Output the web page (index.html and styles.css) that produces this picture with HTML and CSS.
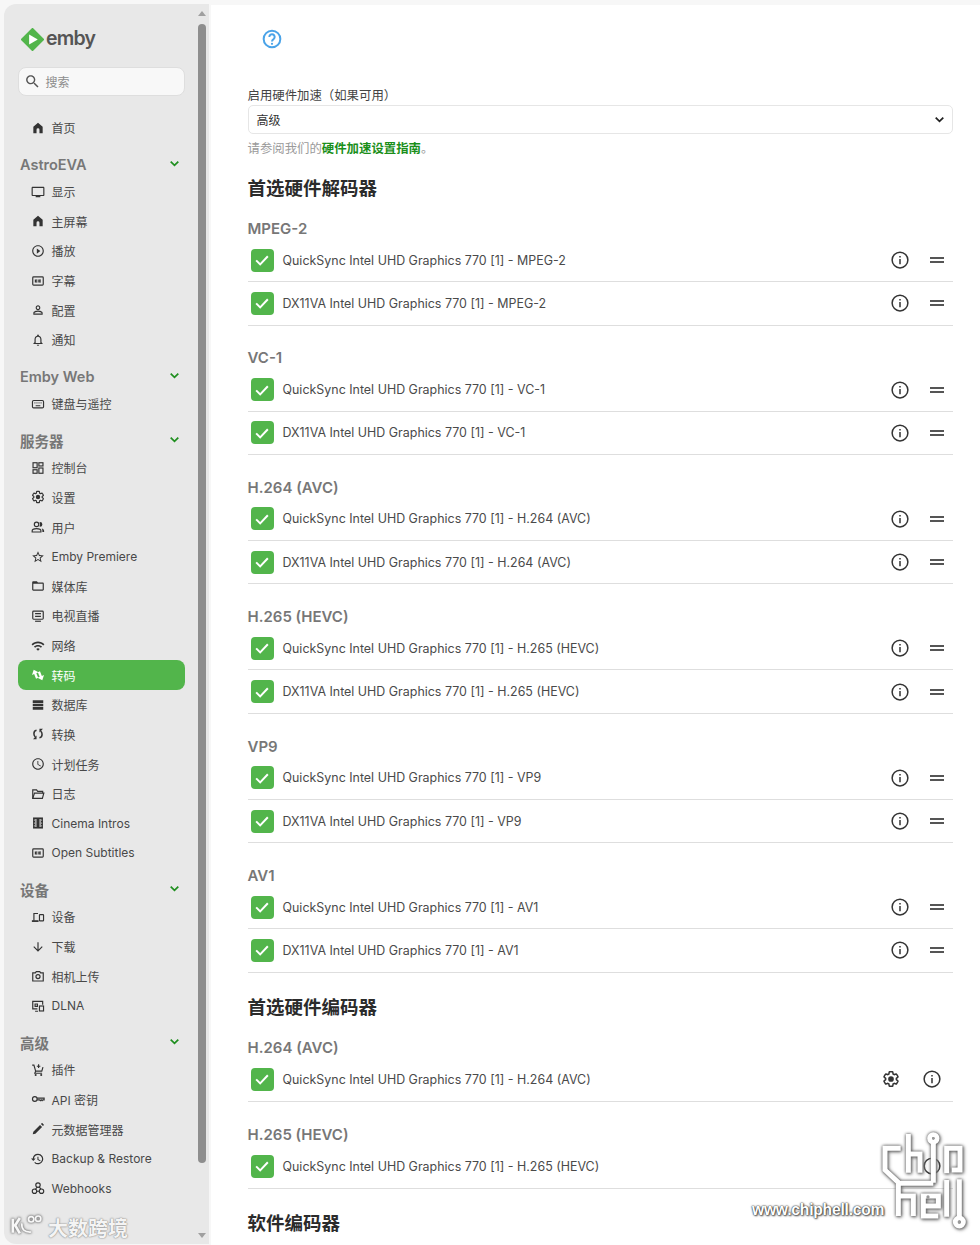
FILE: index.html
```html
<!DOCTYPE html>
<html lang="zh-CN">
<head>
<meta charset="utf-8">
<title>转码</title>
<link rel="stylesheet" href="styles.css">
</head>
<body>
<svg class="sprite" aria-hidden="true">
  <defs>
    <symbol id="i-home" viewBox="0 0 24 24"><path d="M4 21V10l8-7 8 7v11h-5.500v-6a2.500 2.500 0 0 0-5 0v6z"/></symbol>
    <symbol id="i-tv" viewBox="0 0 24 24"><path d="M21 3H3c-1.100 0-2 .9-2 2v12c0 1.100.9 2 2 2h5v2h8v-2h5c1.100 0 2-.9 2-2V5c0-1.100-.9-2-2-2zm0 14H3V5h18v12z"/></symbol>
    <symbol id="i-play" viewBox="0 0 24 24"><path d="M10 16.500l6-4.500-6-4.500v9zM12 2C6.480 2 2 6.480 2 12s4.480 10 10 10 10-4.480 10-10S17.520 2 12 2zm0 18c-4.410 0-8-3.590-8-8s3.590-8 8-8 8 3.590 8 8-3.590 8-8 8z"/></symbol>
    <symbol id="i-cc" viewBox="0 0 24 24"><g class="ln"><rect x="3" y="5" width="18" height="14" rx="1.500"/><path d="M11 10.500H7.500v3H11M17 10.500h-3.500v3H17"/></g></symbol>
    <symbol id="i-person" viewBox="0 0 24 24"><path d="M12 5.900c1.160 0 2.100.94 2.100 2.100s-.94 2.100-2.100 2.100S9.900 9.160 9.900 8s.94-2.100 2.100-2.100m0 9c2.970 0 6.100 1.460 6.100 2.100v1.100H5.900V17c0-.64 3.130-2.100 6.100-2.100M12 4C9.790 4 8 5.790 8 8s1.790 4 4 4 4-1.790 4-4-1.790-4-4-4zm0 9c-2.670 0-8 1.340-8 4v3h16v-3c0-2.660-5.330-4-8-4z"/></symbol>
    <symbol id="i-bell" viewBox="0 0 24 24"><path d="M12 22c1.100 0 2-.9 2-2h-4c0 1.100.9 2 2 2zm6-6v-5c0-3.070-1.630-5.640-4.500-6.320V4c0-.83-.67-1.500-1.500-1.500s-1.500.67-1.500 1.500v.68C7.640 5.360 6 7.920 6 11v5l-2 2v1h16v-1l-2-2zm-2 1H8v-6c0-2.480 1.510-4.500 4-4.500s4 2.020 4 4.500v6z"/></symbol>
    <symbol id="i-keyboard" viewBox="0 0 24 24"><g class="ln"><rect x="2.500" y="6" width="19" height="12.500" rx="2"/><path d="M6 10h1.500M9.500 10H11M13 10h1.500M16.500 10H18M8 15h8"/></g></symbol>
    <symbol id="i-dash" viewBox="0 0 24 24"><g class="ln"><rect x="3.500" y="3" width="7" height="8.500"/><rect x="13.500" y="3" width="7" height="5.500"/><rect x="3.500" y="15" width="7" height="6"/><rect x="13.500" y="12" width="7" height="9"/></g></symbol>
    <symbol id="i-gear" viewBox="0 0 24 24"><path class="ln" d="M19.140 12.940c.04-.3.06-.61.06-.94 0-.32-.02-.64-.07-.94l2.030-1.580c.18-.14.23-.41.12-.61l-1.920-3.320c-.12-.22-.37-.29-.59-.22l-2.390.96c-.5-.38-1.030-.7-1.620-.94l-.36-2.540c-.04-.24-.24-.41-.48-.41h-3.840c-.24 0-.43.17-.47.41l-.36 2.540c-.59.24-1.130.57-1.620.94l-2.390-.96c-.22-.08-.47 0-.59.22L2.740 8.870c-.12.21-.08.47.12.61l2.030 1.580c-.05.3-.09.63-.09.94s.02.64.07.94l-2.030 1.580c-.18.14-.23.41-.12.61l1.920 3.320c.12.22.37.29.59.22l2.390-.96c.5.38 1.030.7 1.620.94l.36 2.540c.05.24.24.41.48.41h3.840c.24 0 .44-.17.47-.41l.36-2.540c.59-.24 1.130-.56 1.620-.94l2.390.96c.22.08.47 0 .59-.22l1.920-3.320c.12-.22.07-.47-.12-.61l-2.010-1.580z"/><circle cx="12" cy="12" r="3.800"/></symbol>
    <symbol id="i-people" viewBox="0 0 24 24"><g class="ln"><circle cx="9.500" cy="7.500" r="3.800"/><path d="M2 20.500v-2c0-2.500 4-3.700 7.500-3.700s7.500 1.200 7.500 3.700v2z"/></g><path d="M15.500 3.500a4 4 0 0 1 0 8l-1-1a5 5 0 0 0 0-6zM18.500 14.500c2 .5 4 1.800 4 3.800v2.200h-3v-2c0-1.600-.5-3-1-4z"/></symbol>
    <symbol id="i-star" viewBox="0 0 24 24"><path d="M22 9.240l-7.190-.62L12 2 9.190 8.630 2 9.240l5.460 4.730L5.820 21 12 17.270 18.180 21l-1.630-7.030L22 9.240zM12 15.400l-3.760 2.270 1-4.280-3.320-2.880 4.380-.38L12 6.100l1.710 4.040 4.380.38-3.320 2.880 1 4.280L12 15.400z"/></symbol>
    <symbol id="i-folder" viewBox="0 0 24 24"><path d="M20 6h-8l-2-2H4c-1.100 0-1.990.9-1.990 2L2 18c0 1.100.9 2 2 2h16c1.100 0 2-.9 2-2V8c0-1.100-.9-2-2-2zm0 12H4V8h16v10z"/></symbol>
    <symbol id="i-live" viewBox="0 0 24 24"><g class="ln"><rect x="3" y="3.500" width="18" height="14" rx="1.500"/><path d="M7 8h10M7 12.500h10"/></g><path d="M7 20h10v2H7z"/></symbol>
    <symbol id="i-wifi" viewBox="0 0 24 24"><path d="M1 9l2 2c4.970-4.970 13.030-4.970 18 0l2-2C16.930 2.930 7.080 2.930 1 9zm8 8l3 3 3-3c-1.650-1.660-4.340-1.660-6 0zm-4-4l2 2c2.760-2.760 7.240-2.760 10 0l2-2C15.140 9.140 8.870 9.140 5 13z"/></symbol>
    <symbol id="i-swap" viewBox="0 0 24 24"><g transform="rotate(-22 12 12)"><path d="M8.500 1L2.500 8h4v8.500h4V8h4z"/><path d="M15.500 23l6-7h-4V7.500h-4V16h-4z"/></g></symbol>
    <symbol id="i-db" viewBox="0 0 24 24"><path d="M3 4h18v4.500H3zM3 10h18v4H3zM3 15.500h18V20H3z"/></symbol>
    <symbol id="i-sync" viewBox="0 0 24 24"><g class="ln thick"><path d="M9.500 5.500C6.500 6 5 8.500 5 11.500c0 2.500 1 4 2.500 5.500"/><path d="M14.500 18.500c3-.5 4.500-3 4.500-6 0-2.500-1-4-2.500-5.500"/></g><path d="M9.500 14.500V21H3.500zM14.500 9.500V3h6z"/></symbol>
    <symbol id="i-clock" viewBox="0 0 24 24"><path d="M11.990 2C6.470 2 2 6.480 2 12s4.470 10 9.990 10C17.520 22 22 17.520 22 12S17.520 2 11.990 2zM12 20c-4.420 0-8-3.580-8-8s3.580-8 8-8 8 3.580 8 8-3.580 8-8 8zm.5-13H11v6l5.250 3.150.75-1.230-4.500-2.670z"/></symbol>
    <symbol id="i-open" viewBox="0 0 24 24"><g class="ln"><path d="M3 19.500V5h6.500l2 2.500h8.500v3"/><path d="M3 19.500l3-9h16l-2.500 9z"/></g></symbol>
    <symbol id="i-film" viewBox="0 0 24 24"><path d="M3.500 2.500h17v19h-17z"/><path class="hole" d="M7.500 5h1.800v14H7.500zM14.700 5h1.800v14h-1.800zM5 6h1.200v2.200H5zM5 11h1.200v2.200H5zM5 16h1.200v2.200H5zM17.800 6H19v2.200h-1.200zM17.800 11H19v2.200h-1.200zM17.800 16H19v2.200h-1.200z"/></symbol>
    <symbol id="i-devices" viewBox="0 0 24 24"><g class="ln"><path d="M12 6H5v12.500"/><rect x="14.500" y="8" width="7" height="10.500" rx="1"/></g><path d="M1.500 17.500h11.500v3H1.500z"/></symbol>
    <symbol id="i-down" viewBox="0 0 24 24"><path d="M20 12l-1.410-1.410L13 16.170V4h-2v12.170l-5.580-5.590L4 12l8 8 8-8z"/></symbol>
    <symbol id="i-camera" viewBox="0 0 24 24"><g class="ln"><path d="M3 6.500h4.500L9 4.500h6l1.500 2H21v14H3z"/><circle cx="12" cy="13" r="3.500"/></g></symbol>
    <symbol id="i-dlna" viewBox="0 0 24 24"><g class="ln"><path d="M11 17H3V4h17v6"/><rect x="14.500" y="12" width="7" height="8.500"/><path d="M7 21h5M7 8.500h4v4H7z"/></g></symbol>
    <symbol id="i-cart" viewBox="0 0 24 24"><g class="ln"><path d="M2 3.500h3l3 10.500h10.500l2-7M8 14l-1.500 3.500H19M13 2v6.500M10 5.500h6"/></g><circle cx="8" cy="20.500" r="1.800"/><circle cx="17.500" cy="20.500" r="1.800"/></symbol>
    <symbol id="i-key" viewBox="0 0 24 24"><g class="ln"><circle cx="6.500" cy="12" r="4"/><path d="M10.500 10.500h12v3h-2l-1.500 1.500-1.500-1.500-1.500 1.500-1.500-1.500h-4"/></g></symbol>
    <symbol id="i-pen" viewBox="0 0 24 24"><path d="M3 21l1-4.500L15.500 5l3.500 3.500L7.500 20zM17 3.500l1.300-1.300c.4-.4 1-.4 1.400 0l2.100 2.100c.4.4.4 1 0 1.400L20.500 7z"/></symbol>
    <symbol id="i-restore" viewBox="0 0 24 24"><path d="M12 3a9 9 0 1 1-6.400 15.400l1.400-1.400A7 7 0 1 0 5 11h3l-4 4.500L0 11h3a9 9 0 0 1 9-8zm-1 5h1.800v4.300l3.700 2.200-.9 1.500-4.600-2.800z"/></symbol>
    <symbol id="i-hook" viewBox="0 0 24 24"><g class="ln"><circle cx="12" cy="7" r="3.800"/><circle cx="6" cy="17.500" r="3.800"/><circle cx="18" cy="17.500" r="3.800"/><path d="M10.500 10.500L7 15M9.500 17.500h5M14 10l3 4"/></g></symbol>
    <symbol id="i-info" viewBox="0 0 24 24"><circle class="ln" cx="12" cy="12" r="10.500"/><path d="M11 10.500h2V17.500h-2zM11 6.500h2v2.200h-2z"/></symbol>
    <symbol id="i-chev" viewBox="0 0 24 24"><path class="ln chev" d="M5 8.500l7 7 7-7"/></symbol>
    <symbol id="i-check" viewBox="0 0 24 24"><path class="ln tick" d="M5 12.500l4.800 4.800L19 7.500"/></symbol>
  </defs>
</svg>

<aside class="sidebar">
  <div class="sidebar-scroll">
    <div class="logo">
      <svg class="logo-mark" viewBox="0 0 24 24"><path class="logo-diamond" d="M12 1l11 11-11 11L1 12z"/><path class="logo-play" d="M8.500 6.800L17.500 12l-9 5.200z"/></svg>
      <span class="logo-word">emby</span>
    </div>
    <div class="search">
      <svg class="search-icon" viewBox="0 0 24 24"><path d="M15.500 14h-.79l-.28-.27C15.410 12.590 16 11.110 16 9.500 16 5.910 13.090 3 9.500 3S3 5.910 3 9.500 5.910 16 9.500 16c1.610 0 3.090-.59 4.230-1.570l.27.28v.79l5 4.990L20.490 19l-4.990-5zm-6 0C7.010 14 5 11.990 5 9.500S7.010 5 9.500 5 14 7.010 14 9.500 11.990 14 9.500 14z"/></svg>
      <span>搜索</span>
    </div>
    <nav class="nav">
      <a class="nav-row"><svg class="nav-icon"><use href="#i-home"/></svg>首页</a>

      <div class="nav-head"><span>AstroEVA</span><svg class="nav-chev"><use href="#i-chev"/></svg></div>
      <a class="nav-row"><svg class="nav-icon"><use href="#i-tv"/></svg>显示</a>
      <a class="nav-row"><svg class="nav-icon"><use href="#i-home"/></svg>主屏幕</a>
      <a class="nav-row"><svg class="nav-icon"><use href="#i-play"/></svg>播放</a>
      <a class="nav-row"><svg class="nav-icon"><use href="#i-cc"/></svg>字幕</a>
      <a class="nav-row"><svg class="nav-icon"><use href="#i-person"/></svg>配置</a>
      <a class="nav-row"><svg class="nav-icon"><use href="#i-bell"/></svg>通知</a>

      <div class="nav-head"><span>Emby Web</span><svg class="nav-chev"><use href="#i-chev"/></svg></div>
      <a class="nav-row"><svg class="nav-icon"><use href="#i-keyboard"/></svg>键盘与遥控</a>

      <div class="nav-head"><span>服务器</span><svg class="nav-chev"><use href="#i-chev"/></svg></div>
      <a class="nav-row"><svg class="nav-icon"><use href="#i-dash"/></svg>控制台</a>
      <a class="nav-row"><svg class="nav-icon"><use href="#i-gear"/></svg>设置</a>
      <a class="nav-row"><svg class="nav-icon"><use href="#i-people"/></svg>用户</a>
      <a class="nav-row"><svg class="nav-icon"><use href="#i-star"/></svg>Emby Premiere</a>
      <a class="nav-row"><svg class="nav-icon"><use href="#i-folder"/></svg>媒体库</a>
      <a class="nav-row"><svg class="nav-icon"><use href="#i-live"/></svg>电视直播</a>
      <a class="nav-row"><svg class="nav-icon"><use href="#i-wifi"/></svg>网络</a>
      <a class="nav-row active"><svg class="nav-icon"><use href="#i-swap"/></svg>转码</a>
      <a class="nav-row"><svg class="nav-icon"><use href="#i-db"/></svg>数据库</a>
      <a class="nav-row"><svg class="nav-icon"><use href="#i-sync"/></svg>转换</a>
      <a class="nav-row"><svg class="nav-icon"><use href="#i-clock"/></svg>计划任务</a>
      <a class="nav-row"><svg class="nav-icon"><use href="#i-open"/></svg>日志</a>
      <a class="nav-row"><svg class="nav-icon"><use href="#i-film"/></svg>Cinema Intros</a>
      <a class="nav-row"><svg class="nav-icon"><use href="#i-cc"/></svg>Open Subtitles</a>

      <div class="nav-head"><span>设备</span><svg class="nav-chev"><use href="#i-chev"/></svg></div>
      <a class="nav-row"><svg class="nav-icon"><use href="#i-devices"/></svg>设备</a>
      <a class="nav-row"><svg class="nav-icon"><use href="#i-down"/></svg>下载</a>
      <a class="nav-row"><svg class="nav-icon"><use href="#i-camera"/></svg>相机上传</a>
      <a class="nav-row"><svg class="nav-icon"><use href="#i-dlna"/></svg>DLNA</a>

      <div class="nav-head"><span>高级</span><svg class="nav-chev"><use href="#i-chev"/></svg></div>
      <a class="nav-row"><svg class="nav-icon"><use href="#i-cart"/></svg>插件</a>
      <a class="nav-row"><svg class="nav-icon"><use href="#i-key"/></svg>API 密钥</a>
      <a class="nav-row"><svg class="nav-icon"><use href="#i-pen"/></svg>元数据管理器</a>
      <a class="nav-row"><svg class="nav-icon"><use href="#i-restore"/></svg>Backup &amp; Restore</a>
      <a class="nav-row"><svg class="nav-icon"><use href="#i-hook"/></svg>Webhooks</a>
    </nav>
  </div>
  <div class="scrollbar">
    <span class="arrow-up"></span>
    <span class="thumb"></span>
    <span class="arrow-down"></span>
  </div>
  <div class="wm-brand">
    <svg class="wm-brand-mark" viewBox="20 40 110 90"><path class="wm-k" d="M37 60V102M58 58L44 80L58 104"/><path d="M64 74Q62 102 92 100"/><circle cx="92" cy="62" r="8"/><circle cx="113" cy="60" r="8"/></svg>
    <span>大数跨境</span>
  </div>
</aside>

<main class="main">
  <svg class="help" viewBox="0 0 24 24"><circle class="help-ring" cx="12" cy="12" r="10"/><path class="help-q" d="M8.800 9.500a3.200 3.200 0 1 1 5.200 2.500c-1.200.9-2 1.500-2 3"/><circle class="help-dot" cx="12" cy="17.800" r="1.300"/></svg>

  <label class="field-label">启用硬件加速（如果可用）</label>
  <div class="select"><span>高级</span><svg class="select-chev"><use href="#i-chev"/></svg></div>
  <p class="field-note">请参阅我们的<a class="link">硬件加速设置指南</a>。</p>

  <h2 class="heading">首选硬件解码器</h2>

  <section class="group">
    <h3>MPEG-2</h3>
    <div class="row"><span class="check"><svg><use href="#i-check"/></svg></span><span class="row-text">QuickSync Intel UHD Graphics 770 [1] - MPEG-2</span><span class="actions"><svg class="act"><use href="#i-info"/></svg><span class="drag"></span></span></div>
    <div class="row"><span class="check"><svg><use href="#i-check"/></svg></span><span class="row-text">DX11VA Intel UHD Graphics 770 [1] - MPEG-2</span><span class="actions"><svg class="act"><use href="#i-info"/></svg><span class="drag"></span></span></div>
  </section>
  <section class="group">
    <h3>VC-1</h3>
    <div class="row"><span class="check"><svg><use href="#i-check"/></svg></span><span class="row-text">QuickSync Intel UHD Graphics 770 [1] - VC-1</span><span class="actions"><svg class="act"><use href="#i-info"/></svg><span class="drag"></span></span></div>
    <div class="row"><span class="check"><svg><use href="#i-check"/></svg></span><span class="row-text">DX11VA Intel UHD Graphics 770 [1] - VC-1</span><span class="actions"><svg class="act"><use href="#i-info"/></svg><span class="drag"></span></span></div>
  </section>
  <section class="group">
    <h3>H.264 (AVC)</h3>
    <div class="row"><span class="check"><svg><use href="#i-check"/></svg></span><span class="row-text">QuickSync Intel UHD Graphics 770 [1] - H.264 (AVC)</span><span class="actions"><svg class="act"><use href="#i-info"/></svg><span class="drag"></span></span></div>
    <div class="row"><span class="check"><svg><use href="#i-check"/></svg></span><span class="row-text">DX11VA Intel UHD Graphics 770 [1] - H.264 (AVC)</span><span class="actions"><svg class="act"><use href="#i-info"/></svg><span class="drag"></span></span></div>
  </section>
  <section class="group">
    <h3>H.265 (HEVC)</h3>
    <div class="row"><span class="check"><svg><use href="#i-check"/></svg></span><span class="row-text">QuickSync Intel UHD Graphics 770 [1] - H.265 (HEVC)</span><span class="actions"><svg class="act"><use href="#i-info"/></svg><span class="drag"></span></span></div>
    <div class="row"><span class="check"><svg><use href="#i-check"/></svg></span><span class="row-text">DX11VA Intel UHD Graphics 770 [1] - H.265 (HEVC)</span><span class="actions"><svg class="act"><use href="#i-info"/></svg><span class="drag"></span></span></div>
  </section>
  <section class="group">
    <h3>VP9</h3>
    <div class="row"><span class="check"><svg><use href="#i-check"/></svg></span><span class="row-text">QuickSync Intel UHD Graphics 770 [1] - VP9</span><span class="actions"><svg class="act"><use href="#i-info"/></svg><span class="drag"></span></span></div>
    <div class="row"><span class="check"><svg><use href="#i-check"/></svg></span><span class="row-text">DX11VA Intel UHD Graphics 770 [1] - VP9</span><span class="actions"><svg class="act"><use href="#i-info"/></svg><span class="drag"></span></span></div>
  </section>
  <section class="group">
    <h3>AV1</h3>
    <div class="row"><span class="check"><svg><use href="#i-check"/></svg></span><span class="row-text">QuickSync Intel UHD Graphics 770 [1] - AV1</span><span class="actions"><svg class="act"><use href="#i-info"/></svg><span class="drag"></span></span></div>
    <div class="row"><span class="check"><svg><use href="#i-check"/></svg></span><span class="row-text">DX11VA Intel UHD Graphics 770 [1] - AV1</span><span class="actions"><svg class="act"><use href="#i-info"/></svg><span class="drag"></span></span></div>
  </section>

  <h2 class="heading heading-enc">首选硬件编码器</h2>

  <section class="group group-enc">
    <h3>H.264 (AVC)</h3>
    <div class="row"><span class="check"><svg><use href="#i-check"/></svg></span><span class="row-text">QuickSync Intel UHD Graphics 770 [1] - H.264 (AVC)</span><span class="actions actions-enc"><svg class="act"><use href="#i-gear"/></svg><svg class="act"><use href="#i-info"/></svg></span></div>
  </section>
  <section class="group group-enc">
    <h3>H.265 (HEVC)</h3>
    <div class="row"><span class="check"><svg><use href="#i-check"/></svg></span><span class="row-text">QuickSync Intel UHD Graphics 770 [1] - H.265 (HEVC)</span><span class="actions actions-enc"><svg class="act"><use href="#i-info"/></svg></span></div>
  </section>

  <h2 class="heading heading-soft">软件编码器</h2>
</main>

<svg class="wm-chip-logo" viewBox="0 0 330 375">
  <g class="wm-strokes">
    <path d="M92 85H45V150L85 187V288M115 42V158M115 102H150V158M190 68V188M92 190H190M85 228H130V288M205 288H160V228H205V258H165M230 160V85H270V150H245M230 180V290M268 178V292"/>
    <circle cx="190" cy="55" r="11"/><circle cx="268" cy="306" r="12"/>
  </g>
  <circle class="wm-dot" cx="190" cy="55" r="4"/><circle class="wm-dot" cx="268" cy="306" r="5"/><circle class="wm-dot" cx="174" cy="231" r="5"/>
</svg>
<span class="wm-url">www.chiphell.com</span>
</body>
</html>
```
FILE: styles.css
```css
* { box-sizing: border-box; }
html, body { margin: 0; height: 1245px; overflow: hidden; }
body {
  display: flex;
  gap: 2px;
  padding: 4px 0 0 4px;
  background: #f7f7f7;
  font-family: Inter, "Noto Sans CJK SC", sans-serif;
  color: #444;
}
.sprite { position: absolute; width: 0; height: 0; }
.ln { fill: none; stroke: currentColor; stroke-width: 2; }
.ln.thick { stroke-width: 2.600; }
.ln.chev { stroke-width: 3.200; }
.ln.tick { stroke-width: 2.400; }
.hole { fill: #e8e8e8; }

/* Sidebar */
.sidebar {
  position: relative;
  flex: 0 0 205px;
  height: 1240px;
  display: flex;
  background: #e8e8e8;
  border-radius: 12px 0 0 12px;
  overflow: hidden;
}
.sidebar-scroll { width: 193px; padding-left: 13.500px; flex: none; }
.logo { display: flex; align-items: center; gap: 2px; height: 30px; margin: 20px 0 0 3.500px; }
.logo-mark { width: 23px; height: 23px; flex: none; }
.logo-diamond { fill: #52b54b; stroke: #52b54b; stroke-width: 2; stroke-linejoin: round; }
.logo-play { fill: #fff; }
.logo-word { font-size: 19.500px; font-weight: 600; letter-spacing: -0.800px; color: #555; line-height: 30px; position: relative; top: -1px; }
.search {
  display: flex; align-items: center; gap: 5px;
  height: 29px; width: 167px; margin-top: 13px; padding-left: 5px;
  background: #f8f8f8; border: 1px solid #dedede; border-radius: 8px;
  font-size: 12px; color: #8c8c8c;
}
.search-icon { width: 17px; height: 17px; fill: #555; }
.nav { margin-top: 16.800px; }
.nav-row {
  display: flex; align-items: center; gap: 7px;
  width: 167px; height: 29.630px; padding-left: 13px;
  font-size: 12px; color: #484848; border-radius: 8px;
}
.nav-row.active { background: #52b54b; color: #fff; }
.nav-icon { width: 14px; height: 14px; flex: none; fill: #333; color: #333; }
.nav-row.active .nav-icon { fill: #fff; color: #fff; }
.nav-head {
  display: flex; align-items: center; justify-content: space-between;
  width: 167px; height: 34.400px; padding: 10px 3.500px 0 2.500px;
  font-size: 14.500px; font-weight: 600; color: #777;
}
.nav-chev { width: 13px; height: 13px; color: #1f8f1f; fill: none; position: relative; top: -1px; }
.scrollbar {
  width: 12px; margin-left: -1px; padding-top: 7px;
  display: flex; flex-direction: column; align-items: center;
}
.arrow-up, .arrow-down { width: 0; height: 0; border-left: 4.500px solid transparent; border-right: 4.500px solid transparent; }
.arrow-up { border-bottom: 5px solid #a0a0a0; }
.thumb { width: 8px; height: 1139px; margin-top: 8px; background: #8e8e8e; border-radius: 4px; }
.arrow-down { border-top: 5px solid #a0a0a0; margin-top: 70px; }
.wm-brand {
  position: absolute; left: 3px; top: 1208px;
  display: flex; align-items: center; gap: 4px;
  font-size: 20px; font-weight: 700; color: #f4f4f4;
  text-shadow: 0 0 2px #888, 0 0 1px #888;
}
.wm-brand-mark { width: 37px; height: 30px; fill: none; stroke: #f8f8f8; stroke-width: 5; filter: drop-shadow(0 0 1px #777) drop-shadow(0 0 1px #999); }
.wm-brand-mark .wm-k { stroke-width: 8; }

/* Main */
.main {
  flex: 1; height: 1241px; margin-top: 1px;
  padding: 24px 27px 0 36.500px;
  background: #fff;
  overflow: hidden;
}
.help { display: block; width: 20px; height: 20px; margin-left: 14px; }
.help-ring { fill: none; stroke: #4aa3e8; stroke-width: 2.400; }
.help-q { fill: none; stroke: #4aa3e8; stroke-width: 2.400; }
.help-dot { fill: #4aa3e8; }
.field-label { display: block; margin-top: 37px; font-size: 12.400px; line-height: 20px; color: #444; }
.select {
  display: flex; align-items: center; justify-content: space-between;
  height: 29px; margin-top: -1px; padding: 0 6px 0 8px;
  border: 1px solid #e6e6e6; border-radius: 5px;
  font-size: 12px; color: #333;
}
.select-chev { width: 13px; height: 13px; color: #222; fill: none; }
.field-note { margin: 5px 0 0; font-size: 12.400px; line-height: 20px; color: #9a9a9a; }
.link { color: #1a8f1a; font-weight: 700; }
.heading { margin: 16px 0 0; font-size: 18.500px; line-height: 26px; font-weight: 700; color: #2b2b2b; }
.heading-enc { margin-top: 21px; }
.heading-soft { margin-top: 21px; }
.group { margin-top: 22.800px; }
.group h3 { margin: 0; font-size: 15px; line-height: 20px; font-weight: 600; color: #777; }
.heading + .group { margin-top: 18px; }
.group-enc + .group-enc { margin-top: 22.500px; }
.row {
  display: flex; align-items: center;
  height: 43.300px; padding-left: 3px;
  border-bottom: 1.500px solid #dedede;
}
.group-enc .row { height: 44.500px; }
.check {
  flex: none; width: 23px; height: 23px;
  display: flex; align-items: center; justify-content: center;
  background: #52b54b; border-radius: 4px; color: #fff;
}
.check svg { width: 20px; height: 20px; fill: none; }
.row-text { margin-left: 9px; font-size: 12.450px; color: #4a4a4a; }
.actions { margin-left: auto; display: flex; align-items: center; gap: 21px; padding-right: 9px; }
.actions-enc { gap: 23px; padding-right: 12px; }
.act { width: 18px; height: 18px; fill: #333; color: #333; }
.drag { width: 14px; height: 6px; border-top: 2px solid #555; border-bottom: 2px solid #555; }

/* Watermarks laid over the page */
.wm-chip-logo { position: absolute; left: 870px; top: 1120px; width: 110px; height: 125px; pointer-events: none; filter: drop-shadow(0 0 1.500px #555) drop-shadow(1px 1px 1.500px #888); }
.wm-strokes { fill: none; stroke: #fff; stroke-width: 15; }
.wm-dot { fill: #999; }
.wm-url {
  position: absolute; left: 752px; top: 1201px;
  font-family: "Liberation Sans", sans-serif; font-size: 15.600px; font-weight: 700; color: #fff;
  letter-spacing: -0.200px;
  text-shadow: 0 0 1px #333, 0 0 2px #333, 1px 1px 2px #555;
}
```
